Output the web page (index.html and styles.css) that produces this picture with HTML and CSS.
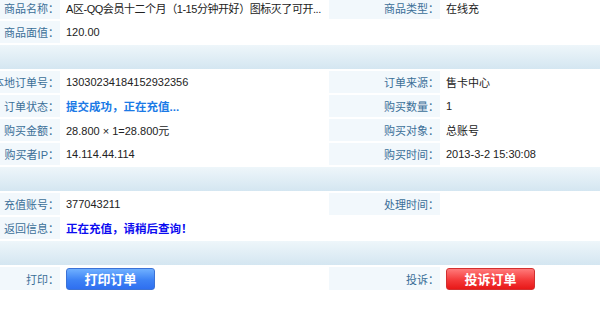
FILE: index.html
```html
<!DOCTYPE html>
<html lang="zh-CN">
<head>
    <meta charset="UTF-8">
    <meta name="viewport" content="width=device-width, initial-scale=1.0">
    <title>订单详情</title>
    <link rel="stylesheet" href="styles.css">
</head>
<body>
    <table class="order">
        <colgroup>
            <col class="c-label"><col class="c-value"><col class="c-label"><col class="c-value">
        </colgroup>
        <tr>
            <th>商品名称：</th>
            <td class="name">A区-QQ会员十二个月（1-15分钟开好）图标灭了可开...</td>
            <th>商品类型：</th>
            <td>在线充</td>
        </tr>
        <tr>
            <th>商品面值：</th>
            <td colspan="3" class="wide">120.00</td>
        </tr>
        <tr class="band"><td colspan="4"></td></tr>

        <tr>
            <th>本地订单号：</th>
            <td>13030234184152932356</td>
            <th>订单来源：</th>
            <td>售卡中心</td>
        </tr>
        <tr>
            <th>订单状态：</th>
            <td class="status">提交成功，正在充值...</td>
            <th>购买数量：</th>
            <td>1</td>
        </tr>
        <tr>
            <th>购买金额：</th>
            <td>28.800 × 1=28.800元</td>
            <th>购买对象：</th>
            <td>总账号</td>
        </tr>
        <tr>
            <th>购买者IP：</th>
            <td>14.114.44.114</td>
            <th>购买时间：</th>
            <td>2013-3-2 15:30:08</td>
        </tr>
        <tr class="band"><td colspan="4"></td></tr>

        <tr>
            <th>充值账号：</th>
            <td>377043211</td>
            <th>处理时间：</th>
            <td></td>
        </tr>
        <tr>
            <th>返回信息：</th>
            <td colspan="3" class="wide notice">正在充值，请稍后查询！</td>
        </tr>
        <tr class="band"><td colspan="4"></td></tr>

        <tr class="actions">
            <th>打印：</th>
            <td><button type="button" class="btn btn-print">打印订单</button></td>
            <th>投诉：</th>
            <td><button type="button" class="btn btn-complain">投诉订单</button></td>
        </tr>
    </table>
</body>
</html>
```

FILE: styles.css
```css
body { margin: 0; background: #fff; overflow: hidden; font-family: "Liberation Sans", "Noto Sans CJK SC", sans-serif; font-size: 11px; color: #222; }
.order { width: 762px; margin: -5px 0 0 -53px; border-spacing: 2px; table-layout: fixed; }
.c-label { width: 111px; }
.c-value { width: 265px; }
.order th { height: 22px; padding: 0 1px 0 0; background: #f2f8fc; color: #3b6f98; font-weight: normal; text-align: right; white-space: nowrap; }
.order td { height: 22px; padding: 0 0 0 4px; white-space: nowrap; overflow: hidden; }
.order td.wide { background: #fff; }
.order td.name { letter-spacing: -0.45px; }
.band td { height: 24px; padding: 0; background: linear-gradient(#eef6fa, #d4e6f1); }
.status { color: #1b7ae6; font-weight: bold; font-size: 11.5px; }
.notice { color: #0c0cf0; font-weight: bold; font-size: 11.5px; }
.actions th, .actions td { height: 23px; }
.btn { width: 89px; height: 22px; padding: 0; border: 1px solid #3b72d6; border-radius: 3px; color: #fff; font-family: "Noto Sans CJK SC", sans-serif; font-size: 13px; font-weight: bold; cursor: pointer; vertical-align: middle; }
.btn-print { background: linear-gradient(#6fb0ff, #3d82f5 55%, #2f6ff0); }
.btn-complain { border-color: #d23030; background: linear-gradient(#ff7a7a, #f43a3a 55%, #e81818); }
```
